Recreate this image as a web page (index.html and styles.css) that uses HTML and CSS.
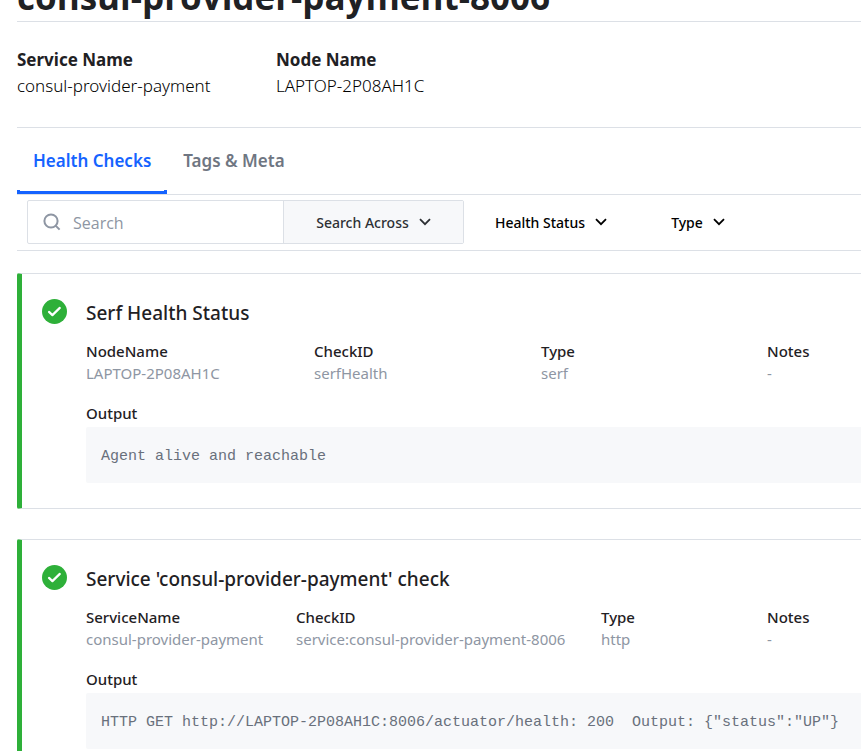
FILE: index.html
```html
<!DOCTYPE html>
<html lang="en">
<head>
<meta charset="utf-8">
<meta name="viewport" content="width=device-width, initial-scale=1">
<title>consul-provider-payment-8006</title>
<link rel="stylesheet" href="styles.css">
</head>
<body>
<svg class="sprite" aria-hidden="true">
  <symbol id="chevron" viewBox="0 0 12 8"><path d="M1 1.2l5 5 5-5" fill="none" stroke="currentColor" stroke-width="1.8"/></symbol>
  <symbol id="passing" viewBox="0 0 25 25"><circle cx="12.5" cy="12.5" r="12.5" fill="#2eb039"/><path d="M7 12.9l3.4 3.2 7.4-7.2" fill="none" stroke="#fff" stroke-width="2.2" stroke-linecap="round" stroke-linejoin="round"/></symbol>
</svg>
<main class="page">
  <header class="page-header"><h1>consul-provider-payment-8006</h1></header>

  <dl class="summary">
    <div><dt>Service Name</dt><dd>consul-provider-payment</dd></div>
    <div><dt>Node Name</dt><dd>LAPTOP-2P08AH1C</dd></div>
  </dl>

  <nav class="tabs">
    <a class="tab active" href="#checks">Health Checks</a>
    <a class="tab" href="#meta">Tags &amp; Meta</a>
  </nav>

  <form class="filters">
    <div class="search">
      <label class="search-field">
        <svg class="search-icon" viewBox="0 0 18 18" aria-hidden="true"><circle cx="8" cy="8" r="6.6" fill="none" stroke="currentColor" stroke-width="2"/><path d="M12.6 12.6l4 4" stroke="currentColor" stroke-width="2"/></svg>
        <input type="search" placeholder="Search" aria-label="Search">
      </label>
      <button type="button" class="menu across">Search Across<svg class="chevron"><use href="#chevron"/></svg></button>
    </div>
    <button type="button" class="menu status">Health Status<svg class="chevron"><use href="#chevron"/></svg></button>
    <button type="button" class="menu type">Type<svg class="chevron"><use href="#chevron"/></svg></button>
  </form>

  <div class="checks" id="checks">
    <article class="check">
      <svg class="check-icon" role="img" aria-label="Passing"><use href="#passing"/></svg>
      <div class="check-body">
        <h2>Serf Health Status</h2>
        <dl class="details node-check">
          <div><dt>NodeName</dt><dd>LAPTOP-2P08AH1C</dd></div>
          <div><dt>CheckID</dt><dd>serfHealth</dd></div>
          <div><dt>Type</dt><dd>serf</dd></div>
          <div><dt>Notes</dt><dd>-</dd></div>
        </dl>
        <h3>Output</h3>
        <pre>Agent alive and reachable</pre>
      </div>
    </article>

    <article class="check">
      <svg class="check-icon" role="img" aria-label="Passing"><use href="#passing"/></svg>
      <div class="check-body">
        <h2>Service 'consul-provider-payment' check</h2>
        <dl class="details service-check">
          <div><dt>ServiceName</dt><dd>consul-provider-payment</dd></div>
          <div><dt>CheckID</dt><dd>service:consul-provider-payment-8006</dd></div>
          <div><dt>Type</dt><dd>http</dd></div>
          <div><dt>Notes</dt><dd>-</dd></div>
        </dl>
        <h3>Output</h3>
        <pre>HTTP GET http://LAPTOP-2P08AH1C:8006/actuator/health: 200  Output: {"status":"UP"}</pre>
      </div>
    </article>
  </div>
</main>
</body>
</html>
```
FILE: styles.css
```css
* { box-sizing: border-box; }
html { overflow: hidden; }
body {
  margin: 0;
  background: #fff;
  color: #1f2124;
  font-family: "Noto Sans", "Open Sans", sans-serif;
  font-size: 15px;
}
h1, h2, h3, dl, dd, pre { margin: 0; }
.sprite { display: none; }
.page { padding-left: 17px; }

.page-header {
  margin-top: -28px;
  border-bottom: 1px solid #dce0e6;
}
h1 {
  font-family: "Open Sans", "Noto Sans", sans-serif;
  font-size: 35px;
  line-height: 49px;
  font-weight: 700;
  white-space: nowrap;
}

.summary {
  display: grid;
  grid-template-columns: 259px 1fr;
  padding: 25px 0 28px;
  border-bottom: 1px solid #dce0e6;
  font-size: 17px;
  line-height: 26px;
}
.summary dt { font-weight: 700; }
.summary dd { color: #000; font-weight: 300; }

.tabs {
  display: flex;
  border-bottom: 1px solid #dce0e6;
}
.tab {
  height: 66px;
  padding: 0 16px;
  border-bottom: 3px solid transparent;
  color: #6f7682;
  font-size: 17px;
  font-weight: 600;
  line-height: 66px;
  text-decoration: none;
}
.tab.active {
  border-bottom-color: #1563ff;
  color: #1563ff;
  background:
    linear-gradient(#1563ff, #1563ff) left bottom / 3px 1px no-repeat,
    linear-gradient(#1563ff, #1563ff) right bottom / 3px 1px no-repeat;
}

.filters {
  display: flex;
  padding: 5px 10px 6px;
  border-bottom: 1px solid #dce0e6;
}
.search {
  display: flex;
  height: 44px;
  border: 1px solid #dce0e6;
  border-radius: 2px;
}
.search-field {
  display: flex;
  align-items: center;
  gap: 12px;
  width: 255px;
  padding-left: 15px;
  color: #8e96a3;
}
.search-icon { width: 18px; height: 18px; flex: none; }
.search-field input {
  flex: 1;
  min-width: 0;
  padding: 2px 0 0;
  border: 0;
  outline: 0;
  background: none;
  font: 400 16px "Open Sans", "Noto Sans", sans-serif;
}
.search-field input::placeholder { color: #8e96a3; opacity: 1; }
.menu {
  display: flex;
  align-items: center;
  justify-content: center;
  gap: 10px;
  padding: 0;
  border: 0;
  background: none;
  color: #000;
  font: 500 14px "Noto Sans", "Open Sans", sans-serif;
  white-space: nowrap;
}
.chevron { width: 12px; height: 8px; flex: none; }
.across {
  width: 180px;
  border-left: 1px solid #dce0e6;
  background: #f7f8fa;
  color: #2d3034;
}
.status { width: 174px; }
.type { width: 120px; }

.checks {
  display: flex;
  flex-direction: column;
  gap: 30px;
  padding-top: 22px;
}
.check {
  display: flex;
  gap: 19px;
  padding: 25px 0 25px 20px;
  border: solid #dce0e6;
  border-width: 1px 0;
  border-left: 5px solid #2eb039;
  border-radius: 2px 0 0 2px;
}
.check-icon { width: 25px; height: 25px; flex: none; }
.check-body { flex: 1; min-width: 0; }
h2 {
  font-size: 19px;
  line-height: 28px;
  font-weight: 500;
}
.details {
  display: grid;
  padding: 13px 0 18px;
  line-height: 22px;
}
.node-check { grid-template-columns: 228fr 227fr 226fr 94fr; }
.service-check { grid-template-columns: 210fr 305fr 166fr 94fr; }
.details dt, h3 { font-weight: 500; }
.details dd {
  color: #8e96a3;
  white-space: nowrap;
}
h3 {
  font-size: 15px;
  line-height: 22px;
}
h3 + pre { margin-top: 3px; }
pre {
  padding: 18px 15px 14px;
  border-radius: 2px 0 0 2px;
  background: #f7f8fa;
  color: #69707c;
  font: 15px/24px "Liberation Mono", monospace;
}
```
